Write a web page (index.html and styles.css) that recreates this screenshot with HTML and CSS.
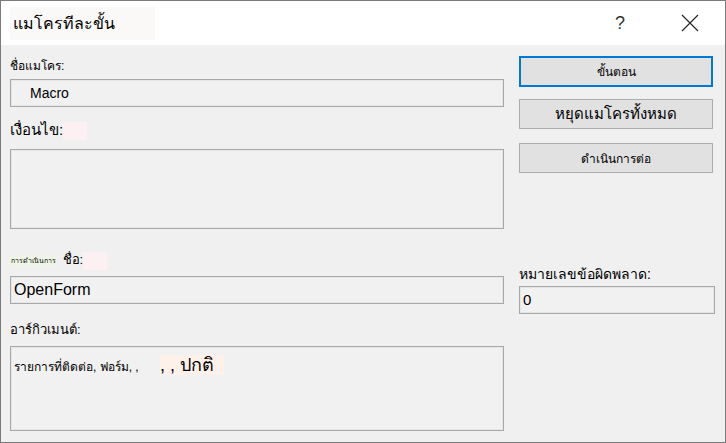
FILE: index.html
```html
<!DOCTYPE html>
<html lang="th">
<head>
    <meta charset="UTF-8">
    <title>แมโครทีละขั้น</title>
    <link rel="stylesheet" href="styles.css">
</head>
<body>
    <div class="window">
        <div class="titlebar">
            <span class="title">แมโครทีละขั้น</span>
            <span class="help">?</span>
            <svg class="close" width="18" height="18" viewBox="0 0 18 18">
                <path d="M1 1 L17 17 M17 1 L1 17" stroke="#222" stroke-width="1.1" fill="none"/>
            </svg>
        </div>
        <div class="content">
            <div class="left">
                <label class="lbl lbl-name">ชื่อแมโคร:</label>
                <div class="box box-name"><span class="macro">Macro</span></div>

                <label class="lbl lbl-cond">เงื่อนไข:<span class="tint-pink"></span></label>
                <div class="box box-cond"></div>

                <label class="lbl lbl-action"><span class="tiny">การดำเนินการ</span> ชื่อ:<span class="tint-pink"></span></label>
                <div class="box box-action">OpenForm</div>

                <label class="lbl lbl-args">อาร์กิวเมนต์:</label>
                <div class="box box-args">รายการที่ติดต่อ, ฟอร์ม, , <span class="big">, , ปกติ</span></div>
            </div>
            <div class="right">
                <button class="btn btn-step">ขั้นตอน</button>
                <button class="btn btn-stop">หยุดแมโครทั้งหมด</button>
                <button class="btn btn-cont">ดำเนินการต่อ</button>
                <label class="lbl lbl-err">หมายเลขข้อผิดพลาด:</label>
                <div class="box box-err">0</div>
            </div>
        </div>
    </div>
</body>
</html>
```

FILE: styles.css
```css
body {
    margin: 0;
    font-family: Tahoma, "Liberation Sans", "Noto Sans", sans-serif;
    color: #000;
}
.window {
    width: 726px;
    height: 443px;
    box-sizing: border-box;
    border: 1px solid #7a7a7a;
    background-color: #f0f0f0;
}
.titlebar {
    height: 44px;
    background-color: #fff;
    display: flex;
    align-items: center;
}
.title {
    font-size: 16px;
    margin-left: 9px;
    padding: 4px 6px 4px 3px;
    background-color: #fbf8f8;
    width: 136px;
}
.help {
    font-size: 18px;
    color: #333;
    margin-left: auto;
    margin-right: 56px;
}
.close {
    margin-right: 26px;
}
.content {
    display: flex;
    gap: 15px;
    padding: 0 10px 0 9px;
}
.left {
    width: 494px;
    display: flex;
    flex-direction: column;
}
.right {
    width: 196px;
    display: flex;
    flex-direction: column;
}
.lbl {
    display: block;
    line-height: 20px;
    height: 20px;
    white-space: nowrap;
}
.lbl-name {
    font-size: 12px;
    margin-top: 11px;
    margin-bottom: 3px;
}
.lbl-cond {
    font-size: 15px;
    margin-top: 13px;
    margin-bottom: 9px;
}
.lbl-action {
    font-size: 13px;
    margin-top: 21px;
    margin-bottom: 6px;
}
.lbl-args {
    font-size: 13px;
    margin-top: 16px;
    margin-bottom: 6px;
}
.lbl-err {
    font-size: 14px;
    margin-top: 91px;
    margin-bottom: 2px;
}
.tint-pink {
    display: inline-block;
    width: 24px;
    height: 18px;
    vertical-align: middle;
    background-color: #fcf0f2;
}
.tiny {
    font-size: 7px;
    background-color: #eef5e6;
    padding: 2px 1px;
    margin-right: 2px;
    vertical-align: middle;
}
.box {
    box-sizing: border-box;
    border: 1px solid #a8a8a8;
    box-shadow: inset 0 0 0 1px #e6e6e6;
    background-color: #f1f1f1;
    padding: 0 3px;
}
.box-name {
    height: 28px;
    line-height: 26px;
    font-family: "Liberation Sans", sans-serif;
    font-size: 14px;
}
.macro {
    margin-left: 16px;
}
.box-cond {
    height: 80px;
}
.box-action {
    height: 28px;
    line-height: 26px;
    font-family: "Liberation Sans", sans-serif;
    font-size: 16px;
}
.box-args {
    height: 85px;
    font-size: 12px;
    padding-top: 3px;
}
.big {
    font-size: 18px;
    margin-left: 18px;
    padding: 0 10px 0 0;
    background-color: #fdf1ea;
}
.box-err {
    height: 28px;
    line-height: 26px;
    font-family: "Liberation Sans", sans-serif;
    font-size: 15px;
}
.btn {
    box-sizing: border-box;
    width: 194px;
    height: 30px;
    font-family: inherit;
    background-color: #e1e1e1;
    border: 1px solid #adadad;
    padding: 0;
    color: #000;
}
.btn-step {
    height: 31px;
    margin-top: 11px;
    border: 2px solid #0078d7;
    font-size: 12px;
}
.btn-stop {
    margin-top: 12px;
    font-size: 15px;
}
.btn-cont {
    margin-top: 14px;
    font-size: 12px;
}
```
